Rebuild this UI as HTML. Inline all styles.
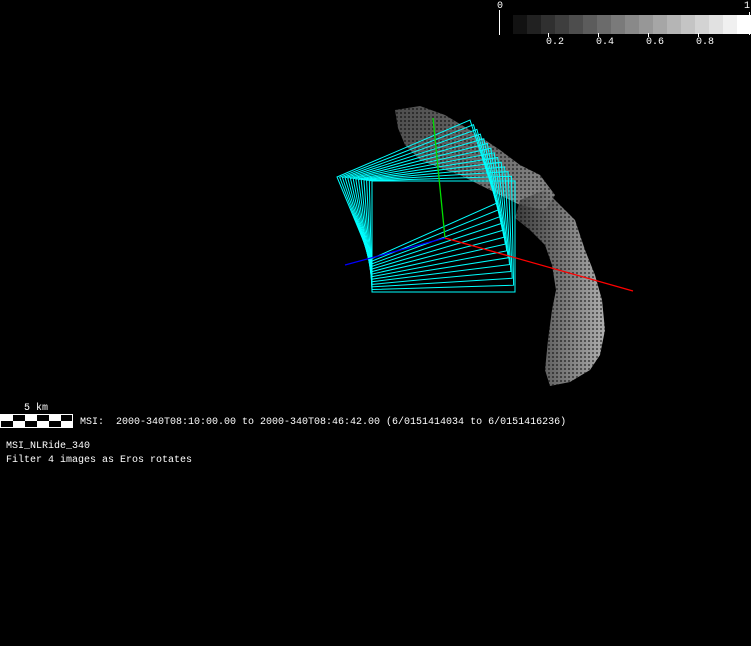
<!DOCTYPE html>
<html><head><style>
html,body{margin:0;padding:0;background:#000;width:751px;height:646px;overflow:hidden}
.t{position:absolute;font-family:"Liberation Mono",monospace;font-size:10px;color:#fff;white-space:pre;line-height:12px}
</style></head><body>
<svg width="751" height="646" style="position:absolute;left:0;top:0">
<defs>
<linearGradient id="g1" x1="0" y1="0" x2="1" y2="0.3">
<stop offset="0" stop-color="#666"/><stop offset="0.6" stop-color="#888"/><stop offset="1" stop-color="#aaa"/></linearGradient>
<linearGradient id="g2" x1="0" y1="0" x2="1" y2="0">
<stop offset="0" stop-color="#444"/><stop offset="0.5" stop-color="#888"/><stop offset="1" stop-color="#ccc"/></linearGradient>
<pattern id="dots" width="4" height="4" patternUnits="userSpaceOnUse"><rect width="4" height="4" fill="#000" opacity="0"/><rect x="0" y="0" width="2" height="2" fill="#000" opacity="0.45"/></pattern>
</defs>
<path d="M395,110 L420,106 L445,115 L470,130 L500,150 L520,165 L540,175 L555,195 L545,210 L520,205 L500,195 L480,185 L460,175 L440,168 L420,160 L405,145 L398,128 Z" fill="url(#g1)" opacity="0.75"/>
<path d="M520,200 L545,190 L560,205 L575,220 L580,235 L585,250 L595,275 L602,300 L605,330 L600,355 L590,370 L570,382 L550,386 L545,370 L548,340 L552,310 L556,290 L552,265 L545,245 L530,230 L515,218 Z" fill="url(#g2)" opacity="0.85"/>
<path d="M395,110 L420,106 L445,115 L470,130 L500,150 L520,165 L540,175 L555,195 L545,210 L520,205 L500,195 L480,185 L460,175 L440,168 L420,160 L405,145 L398,128 Z M520,200 L545,190 L560,205 L575,220 L580,235 L585,250 L595,275 L602,300 L605,330 L600,355 L590,370 L570,382 L550,386 L545,370 L548,340 L552,310 L556,290 L552,265 L545,245 L530,230 L515,218 Z" fill="url(#dots)"/>
<rect x="0" y="414" width="73" height="14" fill="#fff"/>
<rect x="1" y="415" width="71" height="12" fill="#000"/>
<g fill="#fff">
<rect x="1" y="415" width="12" height="6"/><rect x="25" y="415" width="12" height="6"/><rect x="49" y="415" width="12" height="6"/>
<rect x="13" y="421" width="12" height="6"/><rect x="37" y="421" width="12" height="6"/><rect x="61" y="421" width="11" height="6"/>
</g>
<rect x="499" y="10" width="1" height="25" fill="#fff"/>
<g id="cb"></g>
<g fill="#fff"><rect x="548" y="33" width="1" height="4"/><rect x="598" y="33" width="1" height="4"/><rect x="648" y="33" width="1" height="4"/><rect x="698" y="33" width="1" height="4"/><rect x="749" y="12" width="1" height="23"/></g>
<g id="fr" fill="none" stroke="#0ff" stroke-width="1"></g>
<line x1="433" y1="118" x2="445" y2="238" stroke="#0d0" stroke-width="1.3"/>
<line x1="445" y1="238" x2="633" y2="291" stroke="#f00" stroke-width="1.3"/>
<line x1="345" y1="265" x2="445" y2="238" stroke="#00f" stroke-width="1.3"/>
</svg>
<script>
var cb=document.getElementById('cb'),s='';
for(var i=0;i<17;i++){var v=Math.round(18+i*237/16);s+='<rect x="'+(513+i*14)+'" y="15" width="14.2" height="19" fill="rgb('+v+','+v+','+v+')"/>';}
cb.innerHTML=s;
var a=[[337,177],[470,120],[497,203],[371,259]],b=[[372,181],[515,181],[515,292],[372,292]],f='';
for(var k=0;k<14;k++){var t=k/13,p=[];for(var j=0;j<4;j++)p.push((a[j][0]+(b[j][0]-a[j][0])*t).toFixed(1)+','+(a[j][1]+(b[j][1]-a[j][1])*t).toFixed(1));f+='<polygon points="'+p.join(' ')+'"/>';}
document.getElementById('fr').innerHTML=f;
</script>
<div class="t" style="left:497px;top:1px">0</div>
<div class="t" style="left:744px;top:1px">1</div>
<div class="t" style="left:546px;top:37px">0.2</div>
<div class="t" style="left:596px;top:37px">0.4</div>
<div class="t" style="left:646px;top:37px">0.6</div>
<div class="t" style="left:696px;top:37px">0.8</div>
<div class="t" style="left:24px;top:403px">5 km</div>
<div class="t" style="left:80px;top:417px">MSI:  2000-340T08:10:00.00 to 2000-340T08:46:42.00 (6/0151414034 to 6/0151416236)</div>
<div class="t" style="left:6px;top:441px">MSI_NLRide_340</div>
<div class="t" style="left:6px;top:455px">Filter 4 images as Eros rotates</div>
</body></html>
